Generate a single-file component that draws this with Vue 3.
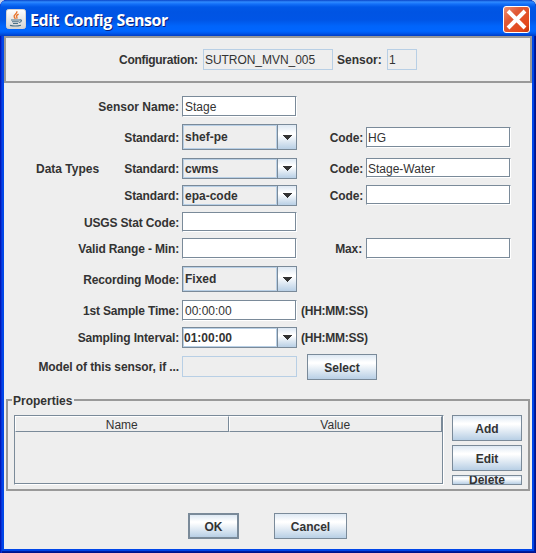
<script setup>
import { ref } from 'vue'

const rows = ref([
  { label: 'Sensor Name:', kind: 'text', value: 'Stage', cls: 'first' },
  { label: 'Standard:', kind: 'combo', value: 'shef-pe', code: 'HG', codeLabel: 'Code:', cls: 'gap7', tall: true },
  { label: 'Standard:', side: 'Data Types', kind: 'combo', value: 'cwms', code: 'Stage-Water', codeLabel: 'Code:', cls: 'gap8', shortCode: true },
  { label: 'Standard:', kind: 'combo', value: 'epa-code', code: '', codeLabel: 'Code:', shortCode: true },
  { label: 'USGS Stat Code:', kind: 'text', value: '', cls: 'short' },
  { label: 'Valid Range - Min:', kind: 'text', value: '', code: '', codeLabel: 'Max:', cls: 'range' },
  { label: 'Recording Mode:', kind: 'combo', value: 'Fixed', cls: 'gap7', tall: true },
  { label: '1st Sample Time:', kind: 'text', value: '00:00:00', hint: '(HH:MM:SS)', cls: 'gap8' },
  { label: 'Sampling Interval:', kind: 'combo', value: '01:00:00', hint: '(HH:MM:SS)', editable: true },
  { label: 'Model of this sensor, if ...', kind: 'readonly', value: '', button: 'Select', cls: 'model' },
])
</script>

<template>
  <div class="window">
    <header class="titlebar">
      <svg class="java" width="20" height="20" viewBox="0 0 20 20">
        <defs>
          <linearGradient id="jbg" x1="0" y1="0" x2="0" y2="1">
            <stop offset="0" stop-color="#fff" /><stop offset="1" stop-color="#d4d4d4" />
          </linearGradient>
        </defs>
        <rect x=".5" y=".5" width="19" height="19" rx="2" fill="url(#jbg)" stroke="#d8d4d0" />
        <path d="M10.8 2.3C11.8 4.8 7.2 5.8 8.2 8L9.4 9.8M12.6 5.2C10.6 6.2 10 6.9 10.8 8Q11.3 8.8 10.6 9.6" fill="none" stroke="#e8742c" stroke-width="1.4" />
        <path d="M5 11H13.4M6 12.8H12.8M7 14.5H12M4 16.4Q9.5 17.8 15 16.2M13.4 11C16.4 10.2 16 13 13 13.5" fill="none" stroke="#4d7288" stroke-width="1.1" />
      </svg>
      <h1>Edit Config Sensor</h1>
      <svg class="close" width="27" height="27" viewBox="0 0 27 27">
        <defs>
          <linearGradient id="xbg" x1="0" y1="0" x2="1" y2="1">
            <stop offset="0" stop-color="#ee9478" /><stop offset=".35" stop-color="#e05a36" />
            <stop offset=".8" stop-color="#e4481a" /><stop offset="1" stop-color="#b83208" />
          </linearGradient>
        </defs>
        <rect x=".5" y=".5" width="26" height="26" rx="2.5" fill="url(#xbg)" stroke="#fff" />
        <path d="M5 5L22 22M22 5L5 22" stroke="#fff" stroke-width="3.9" />
      </svg>
    </header>

    <main class="content">
      <section class="summary">
        <span class="lbl cfg">Configuration:</span>
        <span class="ro cfg-field">SUTRON_MVN_005</span>
        <span class="lbl sensor">Sensor:</span>
        <span class="ro num-field">1</span>
      </section>

      <section class="form">
        <div v-for="(r, i) in rows" :key="i" class="row" :class="r.cls">
          <span class="lbl side">{{ r.side }}</span>
          <span class="lbl name">{{ r.label }}</span>
          <span v-if="r.kind === 'text'" class="field main"><i>{{ r.value }}</i></span>
          <span v-else-if="r.kind === 'readonly'" class="ro main"></span>
          <span v-else class="combo main" :class="{ tall: r.tall, editable: r.editable }">
            <b>{{ r.value }}</b>
            <span class="arrow">
              <svg width="10" height="5" viewBox="0 0 10 5" shape-rendering="crispEdges"><path d="M0 0H10L5 5Z" fill="#333" /></svg>
            </span>
          </span>
          <template v-if="r.codeLabel">
            <span class="lbl code-label">{{ r.codeLabel }}</span>
            <span class="field code" :class="{ low: r.shortCode }"><i>{{ r.code }}</i></span>
          </template>
          <span v-if="r.hint" class="lbl hint">{{ r.hint }}</span>
          <button v-if="r.button" class="btn select">{{ r.button }}</button>
        </div>
      </section>

      <section class="props">
        <h2>Properties</h2>
        <div class="table">
          <div class="thead">
            <span class="th">Name</span>
            <span class="th">Value</span>
          </div>
        </div>
        <div class="side-buttons">
          <button class="btn">Add</button>
          <button class="btn">Edit</button>
          <button class="btn clipped">Delete</button>
        </div>
      </section>

      <footer class="actions">
        <button class="btn ok">OK</button>
        <button class="btn cancel">Cancel</button>
      </footer>
    </main>
  </div>
</template>

<style>
body { background: #c3d0ea; }
</style>

<style scoped>
* { box-sizing: border-box; }
.window {
  width: 536px;
  height: 553px;
  padding: 0 4px 4px;
  border-radius: 7px 7px 0 0;
  background: #0046e8;
  box-shadow: inset 1px 0 #0019b8, inset 2px 0 #0831d9, inset -1px 0 #00138c, inset -2px 0 #001da0, inset 0 -1px #00138c, inset 0 -2px #001da0;
  font: 12px/14px "Liberation Sans", Arial, sans-serif;
  color: #333;
  overflow: hidden;
}
.titlebar {
  display: flex;
  height: 36px;
  margin: 0 -4px;
  padding: 0 6px;
  background: linear-gradient(#0a45c8 0, #2f8bff 2px, #1470f8 4px, #0058e8 7px, #0054e3 12px, #0055e6 20px, #0064fb 26px, #0066ff 31px, #005af0 33px, #003dc5 36px);
}
.java { margin-top: 9px; }
h1 {
  flex: 1;
  margin: 8px 0 0 4px;
  font: bold 16px/24px "Open Sans", sans-serif;
  letter-spacing: -0.45px;
  word-spacing: 1px;
  color: #fff;
  text-shadow: 1px 1px #0a1f7a;
}
.close { margin-top: 6px; }
.content { height: 513px; background: #eee; overflow: hidden; }
.summary {
  display: flex;
  align-items: center;
  height: 47px;
  border: 2px solid #999;
  padding-left: 113px;
}
.lbl { font-weight: bold; white-space: pre; padding-top: 1px; letter-spacing: -0.15px; }
.cfg { width: 84px; letter-spacing: -0.28px; }
.sensor { width: 50px; margin-left: 4px; letter-spacing: 0; }
.ro {
  height: 21px;
  border: 1px solid #b8cfe5;
  padding: 3px 2px 0;
}
.cfg-field { width: 130px; letter-spacing: -0.05px; padding-left: 1px; }
.num-field { width: 30px; padding-left: 1px; }
.form { padding-top: 13px; }
.row { display: flex; align-items: center; height: 21px; margin-top: 6px; }
.first { margin-top: 0; }
.first .name { letter-spacing: 0; }
.gap7 { height: 26px; margin-top: 7px; }
.gap7 .lbl { padding-top: 2px; }
.gap7 .field { margin-top: 1px; }
.gap8 { margin-top: 8px; }
.short { height: 20px; }
.short .lbl { padding-top: 2px; }
.model { height: 26px; }
.model .lbl { padding-top: 0; letter-spacing: -0.1px; }
.model .ro { align-self: flex-start; margin-top: 2px; }
.side { width: 70px; padding-left: 32px; overflow: visible; letter-spacing: 0; }
.name { width: 105px; margin-right: 3px; display: flex; justify-content: flex-end; }
.main { width: 115px; flex: none; }
.field {
  height: 21px;
  border: 1px solid;
  border-color: #7a8a99 #fff #fff #7a8a99;
  background: #fff;
  box-shadow: inset -1px -1px #7a8a99;
  padding: 3px 2px 0;
}
.short .field, .low { height: 20px; }
.low { align-self: flex-start; }
.code { padding-left: 1px; }
i { font-style: normal; }
.combo {
  display: flex;
  height: 21px;
  border: 1px solid #7a8a99;
}
.combo b { flex: 1; border: 1px solid #b8cfe5; padding: 2px 0 0 1px; }
.tall { height: 26px; }
.tall b { padding-top: 4px; }
.editable b { background: #fff; padding-left: 0; }
.arrow {
  width: 19px;
  border-left: 1px solid #7a8a99;
  background: linear-gradient(#dde8f3 0, #fff 35%, #fff 40%, #b8cfe5 100%);
  display: grid;
  place-items: center;
}
.code-label { width: 66px; text-align: right; margin-right: 3px; }
.range .code-label { padding-right: 1px; }
.code { width: 145px; }
.hint { margin-left: 4px; letter-spacing: -0.25px; }
.btn {
  width: 70px;
  height: 26px;
  padding: 2px 0 0;
  border: 1px solid #7a8a99;
  background: linear-gradient(#dde8f3 0, #fff 30%, #fff 35%, #b8cfe5 100%);
  font: bold 12px/14px "Liberation Sans", Arial, sans-serif;
  color: #333;
}
.select { margin-left: 10px; }
.props {
  display: flex;
  height: 92px;
  margin: 19px 2px 0;
  border: 2px solid #999;
  padding: 14px 6px 0;
}
h2 {
  width: 62px;
  height: 14px;
  margin: -21px -62px 0 -2px;
  padding-left: 1px;
  background: #eee;
  font: bold 12px/14px "Liberation Sans", Arial, sans-serif;
}
.table {
  width: 430px;
  height: 70px;
  margin-left: 2px;
  border: 1px solid;
  border-color: #7a8a99 #fff #fff #7a8a99;
  box-shadow: inset -1px -1px #7a8a99;
}
.thead { display: flex; width: 427px; height: 16px; }
.th {
  width: 214px;
  border: 1px solid;
  border-color: #fff #7a8a99 #7a8a99 #fff;
  text-align: center;
  line-height: 16px;
}
.side-buttons { display: flex; flex-direction: column; gap: 4px; margin-left: 8px; }
.clipped { height: 10px; padding-top: 0; line-height: 9px; overflow: hidden; }
.actions { display: flex; gap: 35px; padding: 22px 0 0 184px; }
.ok { width: 51px; border-width: 2px; }
.cancel { width: 73px; }
</style>
